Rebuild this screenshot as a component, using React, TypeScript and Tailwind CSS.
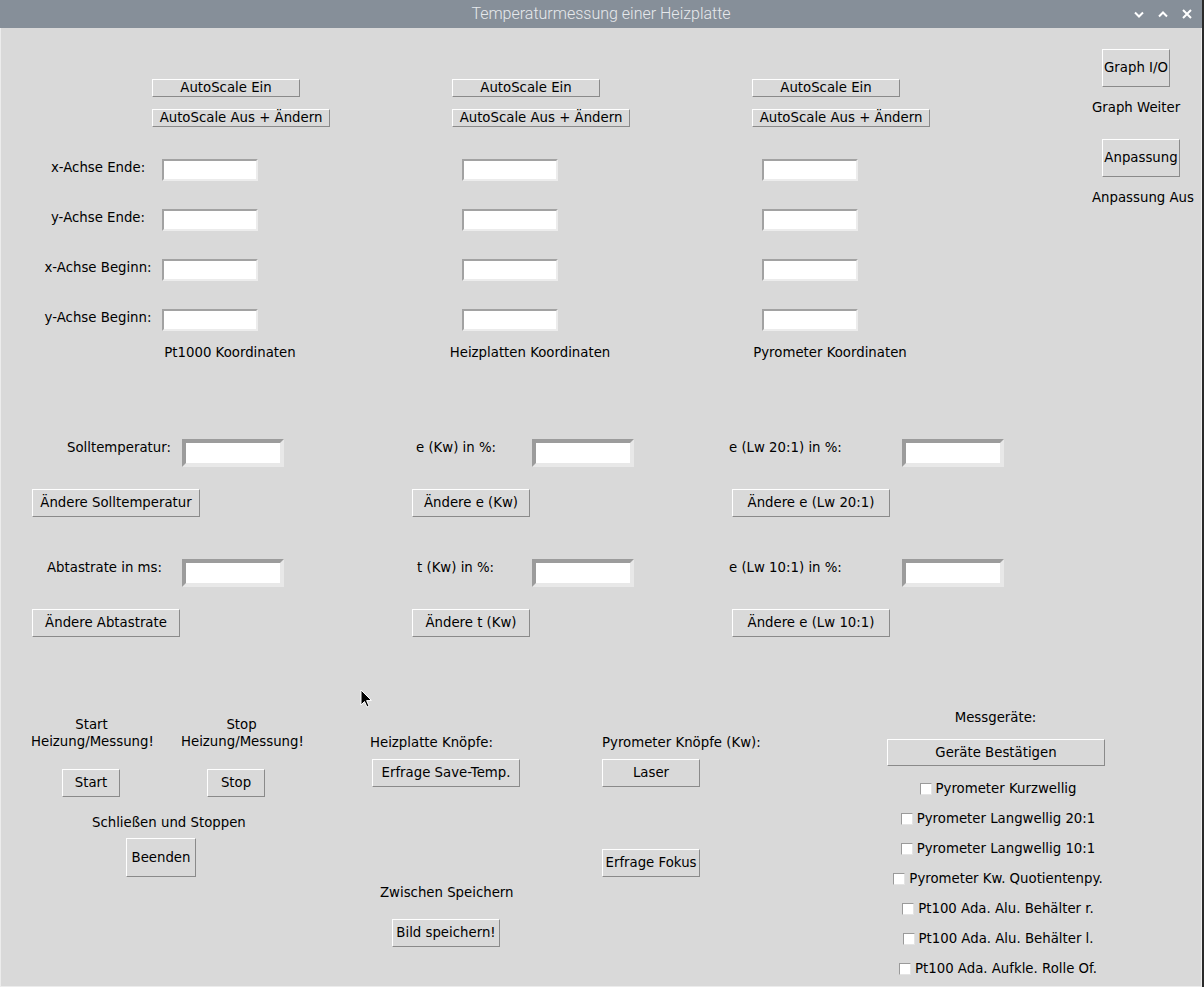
import React from 'react';

const font = "font-['DejaVu_Sans',sans-serif]";

function TkButton({ label, className = '' }: { label: string; className?: string }) {
  return (
    <button
      className={`flex shrink-0 items-center justify-center whitespace-nowrap border border-t-white border-l-white border-b-[#8a8a8a] border-r-[#8a8a8a] bg-[#d9d9d9] text-[13.3px] leading-4 text-black ${className}`}
    >
      {label}
    </button>
  );
}

// flat entry of the coordinate fields
function SmallEntry() {
  return (
    <div className="h-[22px] w-[96px] shrink-0 border-2 border-t-[#a2a2a2] border-l-[#a2a2a2] border-b-[#ececec] border-r-[#ececec] bg-white" />
  );
}

// thick sunken entry of the setpoint fields
function BigEntry() {
  return (
    <div className="h-[28px] w-[102px] shrink-0 border-4 border-t-[#9c9c9c] border-l-[#9c9c9c] border-b-[#e8e8e8] border-r-[#e8e8e8] bg-white" />
  );
}

function Check({ label }: { label: string }) {
  return (
    <div className="mt-[12px] flex items-center gap-[4px] leading-[18px]">
      <span className="h-[12px] w-[12px] border border-t-[#9a9a9a] border-l-[#9a9a9a] border-b-[#e4e4e4] border-r-[#e4e4e4] bg-white" />
      <span className="whitespace-nowrap">{label}</span>
    </div>
  );
}

const axisRows = ['x-Achse Ende:', 'y-Achse Ende:', 'x-Achse Beginn:', 'y-Achse Beginn:'];

const devices = [
  'Pyrometer Kurzwellig',
  'Pyrometer Langwellig 20:1',
  'Pyrometer Langwellig 10:1',
  'Pyrometer Kw. Quotientenpy.',
  'Pt100 Ada. Alu. Behälter r.',
  'Pt100 Ada. Alu. Behälter l.',
  'Pt100 Ada. Aufkle. Rolle Of.',
];

export default function App() {
  return (
    <div className="relative flex h-[987px] w-[1204px] flex-col overflow-hidden border-r-2 border-r-[#2a2a2a] bg-[#d9d9d9]">
      {/* Title bar */}
      <div className="grid h-[28px] shrink-0 grid-cols-[1fr_auto_1fr] items-center bg-[#868f99]">
        <div />
        <div className="font-['Roboto',sans-serif] text-[16px] font-light text-[#e6e9ec]">
          Temperaturmessung einer Heizplatte
        </div>
        <div className="flex items-center justify-end gap-[14px] pr-[10px]">
          <svg width="10" height="7" viewBox="0 0 10 7" fill="none">
            <path d="M1 1.5 L5 5.5 L9 1.5" stroke="white" strokeWidth="2" />
          </svg>
          <svg width="10" height="7" viewBox="0 0 10 7" fill="none">
            <path d="M1 5.5 L5 1.5 L9 5.5" stroke="white" strokeWidth="2" />
          </svg>
          <svg width="10" height="10" viewBox="0 0 10 10" fill="none">
            <path d="M1 1 L9 9 M9 1 L1 9" stroke="white" strokeWidth="2" />
          </svg>
        </div>
      </div>

      {/* Window body */}
      <div className={`flex flex-1 flex-col border-l border-r border-b border-[#ececec] text-[13.3px] text-black ${font}`}>
        {/* Coordinate area + graph buttons */}
        <div className="flex">
          <div className="flex w-[1091px] flex-col">
            <div className="mt-[51px] flex gap-[152px] pl-[151px]">
              <TkButton label="AutoScale Ein" className="h-[18px] w-[148px]" />
              <TkButton label="AutoScale Ein" className="h-[18px] w-[148px]" />
              <TkButton label="AutoScale Ein" className="h-[18px] w-[148px]" />
            </div>
            <div className="mt-[12px] flex gap-[122px] pl-[151px]">
              <TkButton label="AutoScale Aus + Ändern" className="h-[18px] w-[178px]" />
              <TkButton label="AutoScale Aus + Ändern" className="h-[18px] w-[178px]" />
              <TkButton label="AutoScale Aus + Ändern" className="h-[18px] w-[178px]" />
            </div>
            {axisRows.map((label, i) => (
              <div key={label} className={`flex items-start pl-[33px] ${i === 0 ? 'mt-[32px]' : 'mt-[28px]'}`}>
                <div className="w-[128px] text-center leading-[18px] whitespace-nowrap">{label}</div>
                <SmallEntry />
                <div className="w-[204px]" />
                <SmallEntry />
                <div className="w-[204px]" />
                <SmallEntry />
              </div>
            ))}
            <div className="mt-[13px] flex pl-[79px] leading-[18px]">
              <div className="w-[300px] text-center">Pt1000 Koordinaten</div>
              <div className="w-[300px] text-center">Heizplatten Koordinaten</div>
              <div className="w-[300px] text-center">Pyrometer Koordinaten</div>
            </div>
          </div>

          <div className="flex flex-col items-start leading-[18px]">
            <TkButton label="Graph I/O" className="mt-[21px] ml-[10px] h-[38px] w-[68px]" />
            <div className="mt-[12px] whitespace-nowrap">Graph Weiter</div>
            <TkButton label="Anpassung" className="mt-[22px] ml-[10px] h-[38px] w-[78px]" />
            <div className="mt-[12px] whitespace-nowrap">Anpassung Aus</div>
          </div>
        </div>

        {/* Setpoints */}
        <div className="mt-[77px] flex items-start leading-[18px]">
          <div className="w-[181px] pl-[66px] whitespace-nowrap">Solltemperatur:</div>
          <BigEntry />
          <div className="w-[248px] pl-[132px] whitespace-nowrap">e (Kw) in %:</div>
          <BigEntry />
          <div className="w-[268px] pl-[95px] whitespace-nowrap">e (Lw 20:1) in %:</div>
          <BigEntry />
        </div>
        <div className="mt-[22px] flex pl-[31px]">
          <TkButton label="Ändere Solltemperatur" className="h-[28px] w-[168px]" />
          <TkButton label="Ändere e (Kw)" className="ml-[212px] h-[28px] w-[118px]" />
          <TkButton label="Ändere e (Lw 20:1)" className="ml-[202px] h-[28px] w-[158px]" />
        </div>
        <div className="mt-[42px] flex items-start leading-[18px]">
          <div className="w-[181px] pl-[46px] whitespace-nowrap">Abtastrate in ms:</div>
          <BigEntry />
          <div className="w-[248px] pl-[133px] whitespace-nowrap">t (Kw) in %:</div>
          <BigEntry />
          <div className="w-[268px] pl-[95px] whitespace-nowrap">e (Lw 10:1) in %:</div>
          <BigEntry />
        </div>
        <div className="mt-[22px] flex pl-[31px]">
          <TkButton label="Ändere Abtastrate" className="h-[28px] w-[148px]" />
          <TkButton label="Ändere t (Kw)" className="ml-[232px] h-[28px] w-[118px]" />
          <TkButton label="Ändere e (Lw 10:1)" className="ml-[202px] h-[28px] w-[158px]" />
        </div>

        {/* Control buttons + device list */}
        <div className="mt-[72px] flex items-start leading-[18px]">
          <div className="flex w-[339px] flex-col items-start">
            <div className="mt-[7px] flex leading-[17px]">
              <div className="ml-[30px] w-[121px] text-center whitespace-nowrap">
                Start
                <br />
                Heizung/Messung!
              </div>
              <div className="ml-[29px] w-[121px] text-center whitespace-nowrap">
                Stop
                <br />
                Heizung/Messung!
              </div>
            </div>
            <div className="mt-[19px] flex">
              <TkButton label="Start" className="ml-[61px] h-[28px] w-[58px]" />
              <TkButton label="Stop" className="ml-[87px] h-[28px] w-[58px]" />
            </div>
            <div className="mt-[17px] ml-[91px] whitespace-nowrap">Schließen und Stoppen</div>
            <TkButton label="Beenden" className="mt-[6px] ml-[125px] h-[39px] w-[70px]" />
          </div>

          <div className="flex w-[240px] flex-col items-start">
            <div className="mt-[25px] ml-[30px] whitespace-nowrap">Heizplatte Knöpfe:</div>
            <TkButton label="Erfrage Save-Temp." className="mt-[7px] ml-[32px] h-[28px] w-[148px]" />
            <div className="mt-[97px] ml-[40px] whitespace-nowrap">Zwischen Speichern</div>
            <TkButton label="Bild speichern!" className="mt-[17px] ml-[52px] h-[28px] w-[108px]" />
          </div>

          <div className="flex w-[280px] flex-col items-start">
            <div className="mt-[25px] ml-[22px] whitespace-nowrap">Pyrometer Knöpfe (Kw):</div>
            <TkButton label="Laser" className="mt-[7px] ml-[22px] h-[28px] w-[98px]" />
            <TkButton label="Erfrage Fokus" className="mt-[62px] ml-[22px] h-[28px] w-[98px]" />
          </div>

          <div className="ml-[27px] flex w-[222px] flex-col items-center">
            <div className="pr-[5px]">Messgeräte:</div>
            <TkButton label="Geräte Bestätigen" className="mt-[12px] mb-[2px] h-[27px] w-[218px] self-start" />
            {devices.map((d) => (
              <Check key={d} label={d} />
            ))}
          </div>
        </div>
      </div>

      {/* mouse pointer */}
      <svg className="absolute left-[360px] top-[689px]" width="13" height="20" viewBox="0 0 13 20">
        <path d="M1 1 L1 16 L4.5 12.5 L7 18 L9 17 L6.6 11.6 L11.5 11.5 Z" fill="black" stroke="white" strokeWidth="1" />
      </svg>
    </div>
  );
}
